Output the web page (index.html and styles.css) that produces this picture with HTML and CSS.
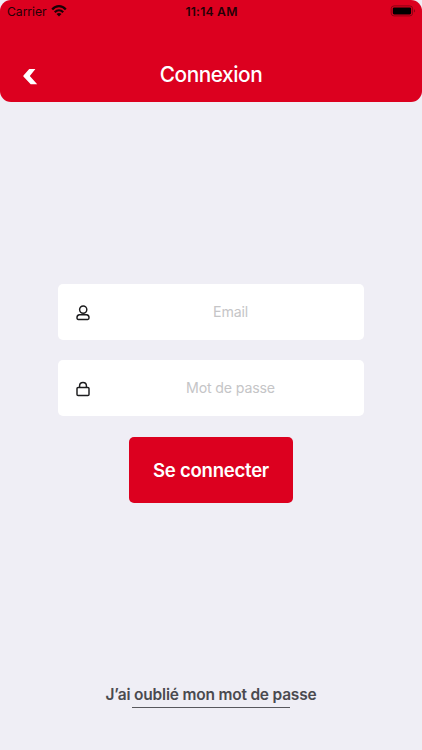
FILE: index.html
```html
<!DOCTYPE html>
<html lang="fr">
<head>
<meta charset="utf-8">
<title>Connexion</title>
<link rel="stylesheet" href="styles.css">
</head>
<body>
<header class="header">
  <div class="status">
    <div class="status-left">
      <span class="carrier">Carrier</span>
      <svg class="wifi" viewBox="0 0 16 12" width="16" height="12" fill="none" stroke="#1c0005" stroke-width="2.2">
        <path d="M1.2 4.5C5 .1 11 .1 14.8 4.5M3.8 7.2C6.2 4.6 9.8 4.6 12.2 7.2"/>
        <path d="M8 11.5 5.5 9Q8 7.1 10.5 9Z" fill="#1c0005" stroke="none"/>
      </svg>
    </div>
    <span class="time">11:14 AM</span>
    <svg class="battery" viewBox="0 0 26 12" width="26" height="12">
      <rect x="1.2" y=".9" width="21.4" height="10" rx="2.8" fill="none" stroke="#8b0013"/>
      <rect x="2.8" y="2.4" width="18.3" height="7" rx="1.3" fill="#000"/>
      <path d="M24 4.2Q26.2 5.9 24 7.6Z" fill="#8b0013"/>
    </svg>
  </div>
  <div class="nav">
    <svg class="back" viewBox="0 0 15 17" width="15" height="17"><path d="M6.2 1H12.4L6.8 8 14.2 16.2H7.7L.4 8.4Q.1 8 .5 7.5Z" fill="#fff"/></svg>
    <h1 class="title">Connexion</h1>
  </div>
</header>
<main class="content">
  <form class="form">
    <label class="field">
      <svg class="icon" viewBox="0 0 14 16" width="14" height="16" fill="none" stroke="#1c1c1e" stroke-width="1.45">
        <circle cx="7.2" cy="4.6" r="3.6"/>
        <path d="M3.5 9.7H10.5Q13 10 13 12.5V13.1Q13 14.4 11.7 14.4H2.3Q1 14.4 1 13.1V12.5Q1 10 3.5 9.7Z"/>
      </svg>
      <input class="input" type="email" placeholder="Email">
    </label>
    <label class="field">
      <svg class="icon" viewBox="0 0 14 16" width="14" height="16" fill="none" stroke="#1c1c1e" stroke-width="1.45">
        <rect x="1" y="6.5" width="12" height="8" rx="1.1"/>
        <path d="M3.6 6.3V4.8A3.4 3.4 0 0 1 10.4 4.8V6.3"/>
      </svg>
      <input class="input" type="password" placeholder="Mot de passe">
    </label>
    <button class="submit" type="button">Se connecter</button>
  </form>
</main>
<footer class="footer">
  <a class="forgot">J’ai oublié mon mot de passe</a>
  <div class="rule"></div>
</footer>
</body>
</html>
```
FILE: styles.css
```css
* { box-sizing: border-box; }
body {
  margin: 0;
  width: 422px;
  height: 750px;
  overflow: hidden;
  display: flex;
  flex-direction: column;
  background: #efeef5;
  font-family: Inter, "Liberation Sans", sans-serif;
}
svg { display: block; flex: none; }
.header {
  height: 102px;
  flex: none;
  border-radius: 11px;
  background: #dc001f;
}
.status {
  height: 22px;
  padding: 0 6px 0 7px;
  display: grid;
  grid-template-columns: 1fr auto 1fr;
  align-items: center;
  color: #250006;
  font-size: 12.2px;
  line-height: 23px;
}
.status-left { display: flex; align-items: center; gap: 4px; }
.carrier { letter-spacing: -.05px; }
.wifi { margin-top: -1px; }
.time { font-weight: 600; font-size: 12.2px; letter-spacing: .2px; }
.battery { justify-self: end; margin-top: -1px; }
.nav {
  height: 80px;
  padding: 24px 23px 0;
  display: grid;
  grid-template-columns: 1fr auto 1fr;
  align-items: center;
}
.back { margin-top: 5px; }
.title {
  margin: 0;
  color: #fff;
  font-size: 20.8px;
  font-weight: 500;
  letter-spacing: -.45px;
}
.content { flex: 1; padding: 182px 58px 0; }
.form { display: flex; flex-direction: column; align-items: center; gap: 20.3px; }
.field {
  width: 305.4px;
  height: 56px;
  display: flex;
  align-items: center;
  padding-left: 18px;
  border-radius: 5px;
  background: #fff;
}
.icon { margin-top: 1px; }
.input {
  flex: 1;
  min-width: 0;
  height: 100%;
  padding: 0 0 1px 7px;
  border: 0;
  background: transparent;
  text-align: center;
  font: 400 14.2px Inter, sans-serif;
  letter-spacing: -.18px;
}
.input::placeholder { color: #c5c5c7; opacity: 1; }
.submit {
  width: 164px;
  height: 66.3px;
  padding: 0;
  border: 0;
  border-radius: 5px;
  background: #dc001f;
  color: #fff;
  font: 600 18.6px Inter, sans-serif;
  letter-spacing: -.28px;
}
.footer {
  height: 66px;
  flex: none;
  display: flex;
  flex-direction: column;
  align-items: center;
  color: #4a4a4f;
}
.forgot { padding-top: 1px; font-size: 15.5px; font-weight: 600; line-height: 20px; letter-spacing: -.2px; }
.rule { width: 158px; height: 1px; margin-top: 2px; background: #58585d; }
```
